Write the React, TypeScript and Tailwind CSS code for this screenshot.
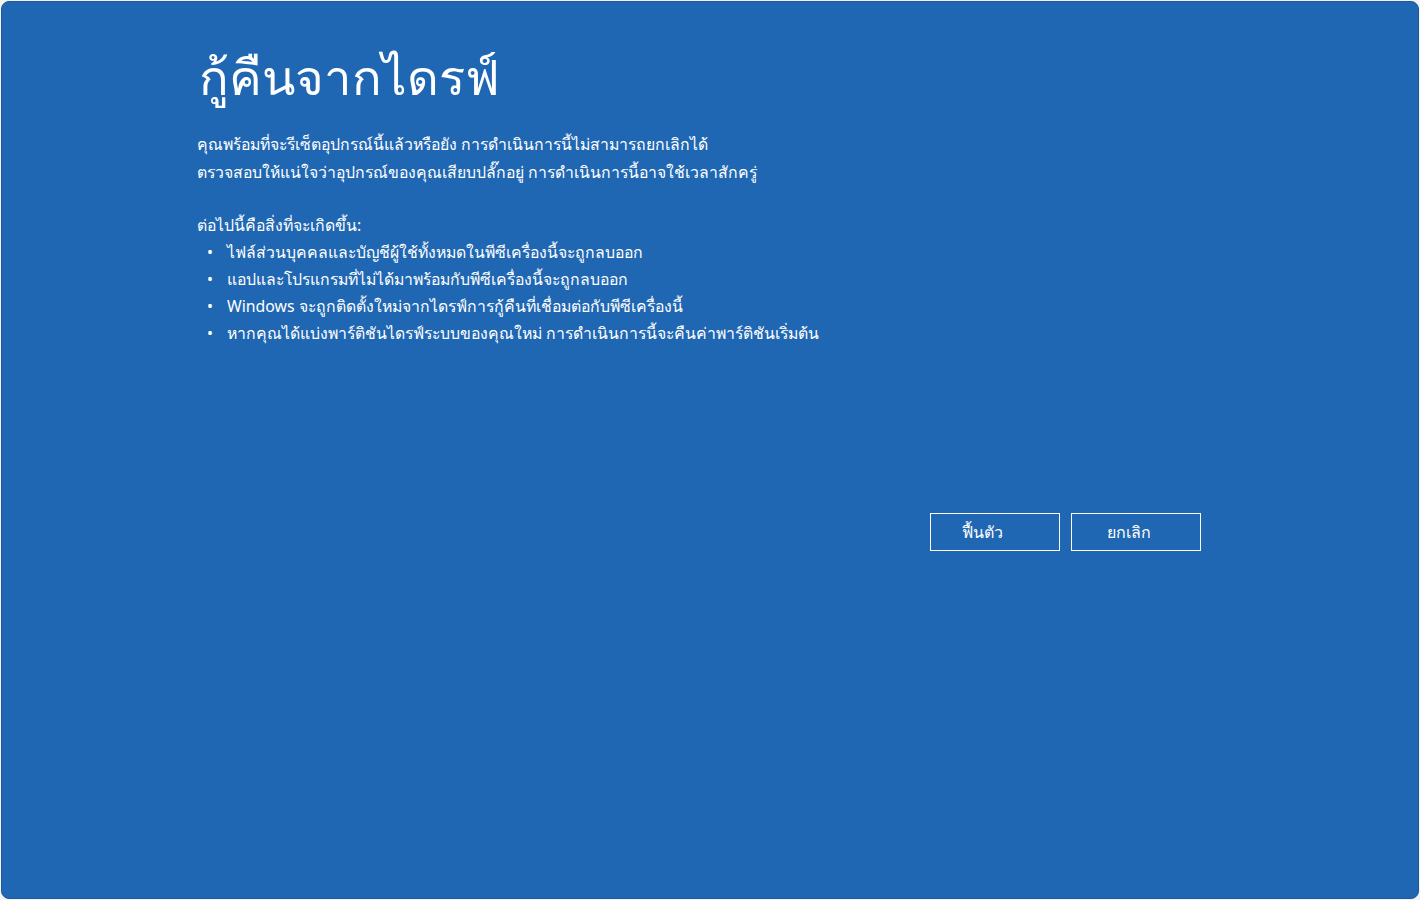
export default function App() {
  const items = [
    'ไฟล์ส่วนบุคคลและบัญชีผู้ใช้ทั้งหมดในพีซีเครื่องนี้จะถูกลบออก',
    'แอปและโปรแกรมที่ไม่ได้มาพร้อมกับพีซีเครื่องนี้จะถูกลบออก',
    'Windows จะถูกติดตั้งใหม่จากไดรฟ์การกู้คืนที่เชื่อมต่อกับพีซีเครื่องนี้',
    'หากคุณได้แบ่งพาร์ติชันไดรฟ์ระบบของคุณใหม่ การดำเนินการนี้จะคืนค่าพาร์ติชันเริ่มต้น',
  ]

  return (
    <div className="w-[1420px] h-[900px] bg-[#f3f3f3] p-px" style={{ fontFamily: '"Noto Sans", "Liberation Sans", sans-serif' }}>
      <div className="h-full rounded-[8px] bg-[#2067b3] border border-[#1b5a9e] text-white">
        <div className="pl-[195px] pt-[39px]">
          <h1 className="text-[49px] leading-[70px] font-normal pl-[2px]">กู้คืนจากไดรฟ์</h1>
          <div className="mt-[19px] text-[15.8px] leading-[28px]">
            <p>คุณพร้อมที่จะรีเซ็ตอุปกรณ์นี้แล้วหรือยัง การดำเนินการนี้ไม่สามารถยกเลิกได้</p>
            <p>ตรวจสอบให้แน่ใจว่าอุปกรณ์ของคุณเสียบปลั๊กอยู่ การดำเนินการนี้อาจใช้เวลาสักครู่</p>
          </div>
          <p className="mt-[26px] text-[15.8px] leading-[27px]">ต่อไปนี้คือสิ่งที่จะเกิดขึ้น:</p>
          <ul className="text-[15.8px] leading-[27px]">
            {items.map((t) => (
              <li key={t} className="flex">
                <span className="w-[30px] pl-[10px]">•</span>
                <span>{t}</span>
              </li>
            ))}
          </ul>
        </div>
        <div className="flex gap-[11px] pl-[928px] mt-[166px]">
          <button className="w-[130px] h-[38px] border border-white text-[16px] text-white pr-[26px]">ฟื้นตัว</button>
          <button className="w-[130px] h-[38px] border border-white text-[16px] text-white pr-[14px]">ยกเลิก</button>
        </div>
      </div>
    </div>
  )
}
